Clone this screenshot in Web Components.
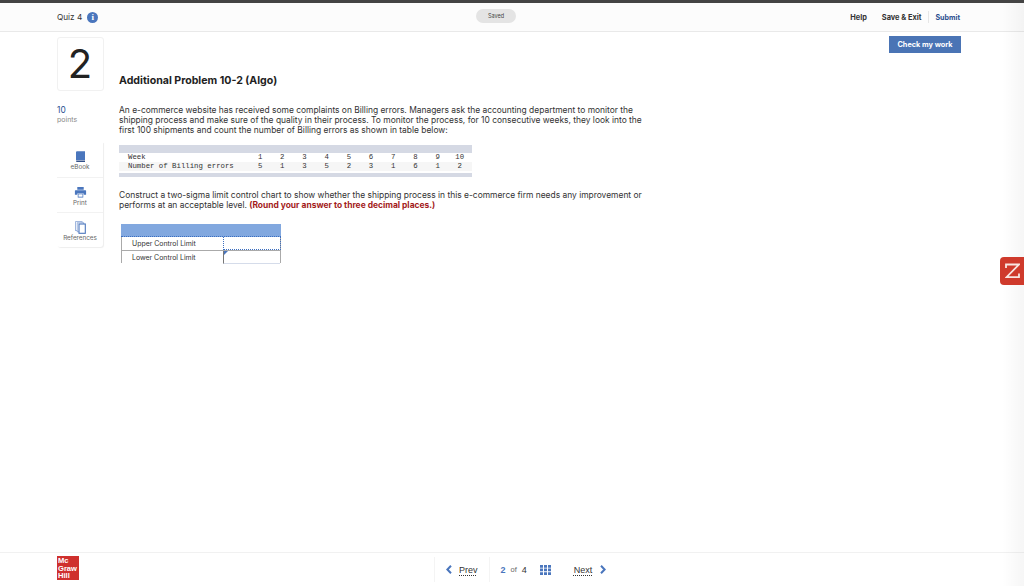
<!DOCTYPE html>
<html lang="en"><head><meta charset="utf-8"><title>Quiz 4</title>
<style>
html,body{margin:0;padding:0;background:#fff;overflow:hidden}
body{width:1024px;height:586px;font-family:Inter,"Liberation Sans",sans-serif;color:#2b2b2b}
quiz-app{display:flex}
</style></head><body>
<quiz-app>
  <quiz-header slot="header"></quiz-header>
  <question-rail slot="rail"></question-rail>
  <question-body slot="body"></question-body>
  <quiz-footer slot="footer"></quiz-footer>
</quiz-app>
<script>
function comp(name,html){
  customElements.define(name,class extends HTMLElement{
    constructor(){super();this.attachShadow({mode:'open'}).innerHTML=html;}
    connectedCallback(){const l=this.shadowRoot.querySelector('.l[data-attr]');if(l)l.textContent=this.getAttribute('label');}
  });
}
comp('tool-item',`<style>
:host{display:flex;flex-direction:column;align-items:center;height:35px;box-sizing:border-box;padding-top:8px;font-size:6.3px;color:#666}
.ic{height:13px;display:flex;align-items:center;justify-content:center}
.l{line-height:8px;white-space:nowrap}
</style><div class="ic"><slot></slot></div><div class="l" data-attr></div>`);
comp('quiz-app',`<style>
:host{display:flex;flex-direction:column;width:1024px;height:586px;position:relative;overflow:hidden;border-top:3px solid #444;box-sizing:border-box}
.main{flex:1;display:flex;min-height:0}
.edge{position:absolute;top:0;right:0;bottom:0;width:22px;background:linear-gradient(to right,rgba(0,0,0,0),rgba(0,0,0,.035));pointer-events:none}
.z{position:absolute;right:0;top:254px;width:24px;height:28px;background:#cf3a2c;border-radius:4px 0 0 4px;display:flex;align-items:center;justify-content:center}
</style>
<slot name="header"></slot>
<div class="main"><slot name="rail"></slot><slot name="body"></slot></div>
<slot name="footer"></slot>
<div class="edge"></div>
<div class="z"><svg width="15" height="16" viewBox="0 0 15 16" fill="none" stroke="#f8e6e2" stroke-width="1.8"><path d="M1 5V1.5H14L1.5 14.2H14V10.5"/></svg></div>`);

comp('quiz-header',`<style>
:host{display:flex;align-items:center;height:29px;box-sizing:border-box;background:#fcfcfc;border-bottom:1px solid #e9e9e9;padding:0 64px 0 57px;position:relative;flex:none}
.q{font-size:8.2px;color:#333;display:flex;align-items:center;gap:5px;width:42px;white-space:nowrap}
.i{width:11px;height:11px;border-radius:50%;background:#4a76bd;color:#fff;display:flex;align-items:center;justify-content:center;font:bold 9px "Liberation Serif",serif;flex:none}
.saved{position:absolute;left:476px;top:6px;width:40px;height:14px;border-radius:7px;background:#e4e4e4;color:#444;font-size:5.5px;display:flex;align-items:center;justify-content:center}
.r{margin-left:auto;display:flex;align-items:center;font-size:7.4px;font-weight:700;color:#333;height:12px}
.h{margin-right:15px;font-size:7.4px}
.s{padding-right:7px;border-right:1px solid #e6e6e6;height:12px;display:flex;align-items:center}
.b{padding-left:6px;color:#2c4f8f;font-size:7.1px}
</style>
<div class="q">Quiz 4<span class="i">i</span></div>
<div class="saved">Saved</div>
<div class="r"><span class="h">Help</span><span class="s">Save &amp; Exit</span><span class="b">Submit</span></div>`);

comp('question-rail',`<style>
:host{display:flex;flex-direction:column;width:47px;margin-left:57px;flex:none;padding-top:5px}
.num{height:54px;box-sizing:border-box;border:1px solid #f1f1f1;border-radius:3px;display:flex;align-items:center;justify-content:center;font-size:40px;font-weight:400;color:#222;line-height:1;padding-right:1px}
.pts{margin-top:14px;height:37px;box-sizing:border-box}
.p1{font-size:8.4px;color:#2c4f8f;line-height:10px}
.p2{font-size:7px;color:#888;line-height:9px}
.tools{width:46px;border-radius:0 0 3px 3px;box-shadow:1px 1px 1px rgba(0,0,0,.07);display:flex;flex-direction:column}
tool-item+tool-item{border-top:1px solid #f2f2f2}
</style>
<div class="num">2</div>
<div class="pts"><div class="p1">10</div><div class="p2">points</div></div>
<div class="tools">
<tool-item label="eBook"><svg width="11" height="12" viewBox="0 0 11 12"><path d="M1 1.2Q1 .3 2 .3H10V9H2.2Q1 9 1 10V1.2Z" fill="#4a76bd"/><path d="M1 10Q1 9.4 2.2 9.4H10V11H2Q1 11 1 10Z" fill="#33518a"/></svg></tool-item>
<tool-item label="Print"><svg width="13" height="11" viewBox="0 0 13 12"><rect x="3" y="0" width="7" height="3" fill="#4a76bd"/><path d="M1 3.5H12Q12.6 3.5 12.6 4.2V8.5H10V7H3V8.5H.4V4.2Q.4 3.5 1 3.5Z" fill="#4a76bd"/><rect x="3.5" y="7.5" width="6" height="4" fill="#4a76bd"/><rect x="4.3" y="8" width="4.4" height="2.6" fill="#fff"/></svg></tool-item>
<tool-item label="References"><svg width="11" height="13" viewBox="0 0 11 13" fill="#fff" stroke="#4a76bd"><rect x=".6" y=".6" width="6.5" height="9" stroke-width=".8" stroke="#8aa6d6"/><rect x="2.2" y="1.8" width="6.5" height="9" stroke-width=".8" stroke="#8aa6d6"/><rect x="4" y="3" width="6.3" height="9.3" stroke-width="1.1"/></svg></tool-item>
</div>`);

comp('question-body',`<style>
:host{display:block;flex:1;position:relative;padding:42px 0 0 15px;min-width:0}
h2{margin:0;font-size:10.6px;font-weight:700;line-height:14px;color:#222}
p{margin:0;font-size:8.43px;line-height:10px;color:#333;white-space:nowrap}
.p1{margin-top:17px}
.p2{margin-top:13px}
b{color:#a31c1c}
.btn{position:absolute;right:63px;top:4px;width:72px;height:17px;background:#4a74b5;color:#fff;font-size:7.3px;font-weight:700;display:flex;align-items:center;justify-content:center}
data-table{margin-top:10px}
answer-table{margin:14px 0 0 2px}
</style>
<div class="btn">Check my work</div>
<h2>Additional Problem 10-2 (Algo)</h2>
<p class="p1">An e-commerce website has received some complaints on Billing errors. Managers ask the accounting department to monitor the<br>shipping process and make sure of the quality in their process. To monitor the process, for 10 consecutive weeks, they look into the<br>first 100 shipments and count the number of Billing errors as shown in table below:</p>
<data-table></data-table>
<p class="p2">Construct a two-sigma limit control chart to show whether the shipping process in this e-commerce firm needs any improvement or<br>performs at an acceptable level. <b>(Round your answer to three decimal places.)</b></p>
<answer-table></answer-table>`);

comp('data-table',`<style>
:host{display:block;width:353px;border-top:8px solid #d5d9e4;border-bottom:4px solid #d5d9e4;padding-bottom:2px;font:7.35px/9px "Liberation Mono",monospace;color:#333}
.row{display:grid;grid-template-columns:121px repeat(10,22.2px);height:9px;padding-left:9px;align-items:center;white-space:nowrap}
.row.alt{background:#f6f6f6}
span{text-align:center}
span:first-child{text-align:left}
</style>
<div class="row"><span>Week</span><span>1</span><span>2</span><span>3</span><span>4</span><span>5</span><span>6</span><span>7</span><span>8</span><span>9</span><span>10</span></div>
<div class="row alt"><span>Number of Billing errors</span><span>5</span><span>1</span><span>3</span><span>5</span><span>2</span><span>3</span><span>1</span><span>6</span><span>1</span><span>2</span></div>`);

comp('answer-table',`<style>
:host{display:block;width:160px;font-size:6.95px;color:#333;box-sizing:border-box;border-left:1px solid #aaa;border-right:1px solid #aaa}
.hd{height:13px;background:#82a8df;margin:0 -1px;box-sizing:border-box;border-bottom:1px dotted #3d6fc0}
.row{display:grid;grid-template-columns:101px 1fr;height:13px;box-sizing:border-box}
.row+.row{border-top:1px solid #aaa}
.l{padding-left:10px;line-height:13px;white-space:nowrap}
.v{border-left:1px dotted #3d6fc0;border-bottom:1px dotted #3d6fc0;border-right:1px dotted #3d6fc0;position:relative;margin-right:-1px}
.row+.row .v{border-left:1px solid #777;border-right:0;border-bottom:1px solid #d5dcea;margin-right:0}
.row+.row .v::before{content:"";position:absolute;left:0;top:0;border-top:4px solid #4a76bd;border-right:4px solid transparent}
</style>
<div class="hd"></div>
<div class="row"><div class="l">Upper Control Limit</div><div class="v"></div></div>
<div class="row"><div class="l">Lower Control Limit</div><div class="v"></div></div>`);

comp('quiz-footer',`<style>
:host{display:flex;align-items:center;height:34px;box-sizing:border-box;border-top:1px solid #f1f1f1;padding-left:57px;position:relative;flex:none;background:#fff}
.logo{width:22px;height:24px;background:#cf302d;color:#fff;font:bold 7.6px/7.6px "Liberation Sans",sans-serif;padding:1px 0 0 1px;box-sizing:border-box;margin-top:-3px}
.nav{position:absolute;left:434px;top:4px;height:25px;display:flex;align-items:center;font:9px "Liberation Sans",sans-serif;color:#333;border-left:1px solid #f4f4f4;padding-left:11px}
.nav svg{flex:none}
u{text-decoration:underline dotted;text-underline-offset:2px}
.prev{margin:0 23px 0 7px}
.n{color:#4a76bd;font-weight:700;margin-right:5px}
.of{font-size:7.5px;color:#666;margin-right:5px}
.grid{margin:0 23px 0 13px}
.next{margin-right:8px}
.sep{position:absolute;left:54px;top:0;bottom:0;border-left:1px solid #f4f4f4}
</style>
<div class="logo">Mc<br>Graw<br>Hill</div>
<div class="nav">
<span class="sep"></span>
<svg width="6" height="9" viewBox="0 0 6 9" fill="none" stroke="#4a76bd" stroke-width="2"><path d="M5 .8L1.4 4.5L5 8.2"/></svg>
<u class="prev">Prev</u>
<span class="n">2</span><span class="of">of</span><span>4</span>
<svg class="grid" width="11" height="10" viewBox="0 0 11 10" fill="#4a76bd"><path d="M0 0h3v2.7H0zM4 0h3v2.7H4zM8 0h3v2.7H8zM0 3.6h3v2.7H0zM4 3.6h3v2.7H4zM8 3.6h3v2.7H8zM0 7.2h3v2.7H0zM4 7.2h3v2.7H4zM8 7.2h3v2.7H8z"/></svg>
<u class="next">Next</u>
<svg width="6" height="9" viewBox="0 0 6 9" fill="none" stroke="#4a76bd" stroke-width="2"><path d="M1 .8L4.6 4.5L1 8.2"/></svg>
</div>`);
</script>
</body></html>
